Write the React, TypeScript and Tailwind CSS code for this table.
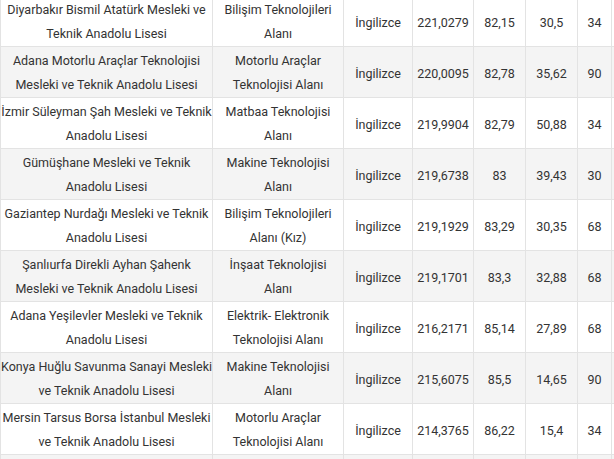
const ROWS: [string[], string[], string, string, string, string, string][] = [
  [["Diyarbakır Bismil Atatürk Mesleki ve", "Teknik Anadolu Lisesi"], ["Bilişim Teknolojileri", "Alanı"], "İngilizce", "221,0279", "82,15", "30,5", "34"],
  [["Adana Motorlu Araçlar Teknolojisi", "Mesleki ve Teknik Anadolu Lisesi"], ["Motorlu Araçlar", "Teknolojisi Alanı"], "İngilizce", "220,0095", "82,78", "35,62", "90"],
  [["İzmir Süleyman Şah Mesleki ve Teknik", "Anadolu Lisesi"], ["Matbaa Teknolojisi", "Alanı"], "İngilizce", "219,9904", "82,79", "50,88", "34"],
  [["Gümüşhane Mesleki ve Teknik", "Anadolu Lisesi"], ["Makine Teknolojisi", "Alanı"], "İngilizce", "219,6738", "83", "39,43", "30"],
  [["Gaziantep Nurdağı Mesleki ve Teknik", "Anadolu Lisesi"], ["Bilişim Teknolojileri", "Alanı (Kız)"], "İngilizce", "219,1929", "83,29", "30,35", "68"],
  [["Şanlıurfa Direkli Ayhan Şahenk", "Mesleki ve Teknik Anadolu Lisesi"], ["İnşaat Teknolojisi", "Alanı"], "İngilizce", "219,1701", "83,3", "32,88", "68"],
  [["Adana Yeşilevler Mesleki ve Teknik", "Anadolu Lisesi"], ["Elektrik- Elektronik", "Teknolojisi Alanı"], "İngilizce", "216,2171", "85,14", "27,89", "68"],
  [["Konya Huğlu Savunma Sanayi Mesleki", "ve Teknik Anadolu Lisesi"], ["Makine Teknolojisi", "Alanı"], "İngilizce", "215,6075", "85,5", "14,65", "90"],
  [["Mersin Tarsus Borsa İstanbul Mesleki", "ve Teknik Anadolu Lisesi"], ["Motorlu Araçlar", "Teknolojisi Alanı"], "İngilizce", "214,3765", "86,22", "15,4", "34"],
  [["", ""], ["", ""], "", "", "", "", ""],
];

function Lines({ lines }: { lines: string[] }) {
  return (
    <>
      {lines.map((l, i) => (
        <div key={i} className="whitespace-nowrap">
          {l || "\u00a0"}
        </div>
      ))}
    </>
  );
}

export default function App() {
  return (
    <div className="w-[614px] h-[459px] overflow-hidden bg-white">
      <table
        className="table-fixed border-collapse -mt-[5px] text-[12.5px] leading-[24px] text-[#333333] w-[640px]"
        style={{ fontFamily: "Roboto, 'Noto Sans', sans-serif" }}
      >
        <colgroup>
          <col className="w-[212px]" />
          <col className="w-[131px]" />
          <col className="w-[69px]" />
          <col className="w-[61px]" />
          <col className="w-[52px]" />
          <col className="w-[52px]" />
          <col className="w-[34px]" />
          <col className="w-[29px]" />
        </colgroup>
        <tbody>
          {ROWS.map((r, i) => (
            <tr key={i} className={i % 2 === 1 ? "bg-[#f4f4f4]" : "bg-white"}>
              <td className="border border-[#e3e3e3] text-center align-middle pt-[2px] pb-0 px-0">
                <Lines lines={r[0]} />
              </td>
              <td className="border border-[#e3e3e3] text-center align-middle pt-[2px] pb-0 px-0">
                <Lines lines={r[1]} />
              </td>
              {r.slice(2).map((c, j) => (
                <td key={j} className="border border-[#e3e3e3] text-center align-middle whitespace-nowrap pt-[4px] pb-0 px-0">
                  {c as string}
                </td>
              ))}
              <td className="border border-[#e3e3e3]" />
            </tr>
          ))}
        </tbody>
      </table>
    </div>
  );
}
